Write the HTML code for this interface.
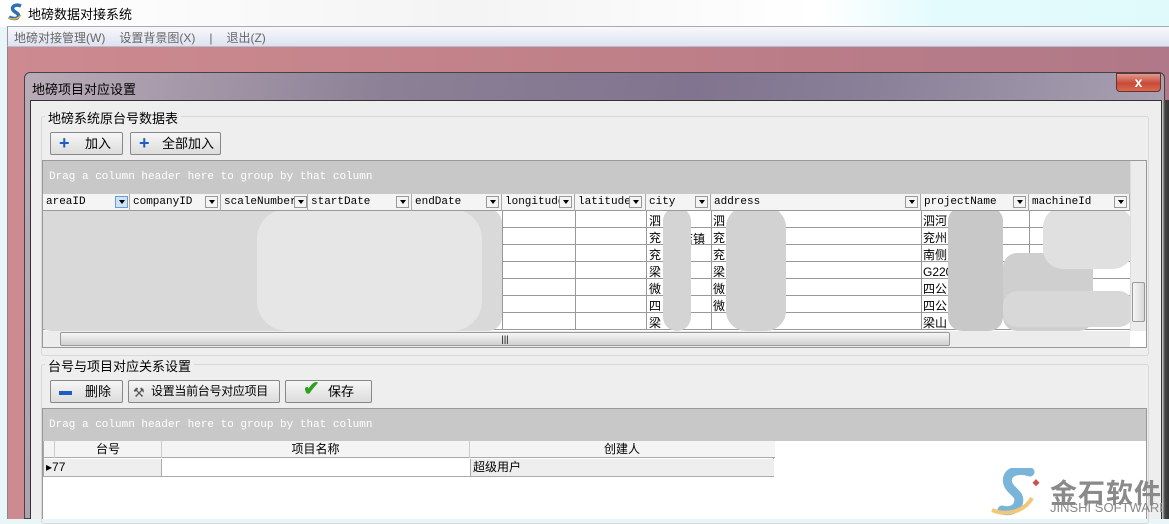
<!DOCTYPE html>
<html><head><meta charset="utf-8"><style>
*{margin:0;padding:0;box-sizing:border-box}
body{width:1169px;height:519px;overflow:hidden;position:relative;background:#e8f6fa;font-family:"Liberation Sans","Noto Sans CJK SC",sans-serif;font-size:12px;color:#000}
.a{position:absolute}
.mono{font-family:"Liberation Mono","Noto Sans CJK SC",monospace;font-size:11px}
.btn{position:absolute;height:23px;border:1px solid #888;border-radius:2px;background:linear-gradient(#f6f6f6,#dcdcdc);font-size:12px;line-height:21px;white-space:nowrap}
.hd{position:absolute;top:0;height:17px;border-right:1px solid #aaa;line-height:17px;padding-left:3px;overflow:hidden;white-space:nowrap}
.dd{position:absolute;top:2px;width:13px;height:12px;border:1px solid #999;background:#f4f4f4}
.dd:after{content:"";position:absolute;left:3px;top:3px;border-left:3px solid transparent;border-right:3px solid transparent;border-top:4px solid #000}
.vl{position:absolute;top:0;width:1px;height:119px;background:#999}
.hl{position:absolute;left:0;height:1px;width:1088px;background:#999}
.blob{position:absolute;background:#d6d6d6;border-radius:14px}
</style></head><body>
<div class="a" style="left:0;top:0;width:1169px;height:27px;background:linear-gradient(90deg,#fff 0,#f4f4f4 40%,#fff 70%,#e4fbfd 80%,#e0fafc 100%)"></div>
<svg class="a" style="left:7px;top:3px" width="18" height="18" viewBox="0 0 18 18"><path d="M14 3C9 1 4 3 6 7c2 3 7 3 5 7-1 2-6 2-9 0" fill="none" stroke="#2e6fb5" stroke-width="3.5"/><path d="M2 15c4 2 9 1 12-3" fill="none" stroke="#f0b040" stroke-width="1.5"/></svg>
<div class="a" style="left:28px;top:4px;font-size:13px">地磅数据对接系统</div>
<div class="a" style="left:7px;top:26px;width:1162px;height:21px;background:linear-gradient(#f8f9fc,#dde2f0);border-top:1px solid #aaa;border-left:1px solid #999;border-bottom:1px solid #b8bccc"></div>
<div class="a" style="left:14px;top:29px;color:#666;font-size:12px;white-space:nowrap">地磅对接管理(W)<span style="margin-left:14px">设置背景图(X)</span><span style="margin-left:14px">|</span><span style="margin-left:14px">退出(Z)</span></div>
<div class="a" style="left:7px;top:47px;width:1162px;height:472px;background:linear-gradient(90deg,#cd8a90,#c08088 50%,#b07888);border-left:1px solid #888"></div>
<div class="a" style="left:24px;top:72px;width:1141px;height:447px;border:1px solid #444;border-radius:6px 6px 0 0;background:linear-gradient(100deg,#b9acb8 0%,#8c8096 30%,#807490 55%,#8a8098 70%,#b0a8b8 100%)"></div>
<div class="a" style="left:32px;top:79px;font-size:13px">地磅项目对应设置</div>
<div class="a" style="left:1116px;top:73px;width:45px;height:19px;border:1px solid #6a3030;border-radius:0 0 4px 4px;background:linear-gradient(#e09a90,#c84a38 55%,#d86a50);color:#fff;font-weight:bold;text-align:center;line-height:17px;font-size:14px">x</div>
<div class="a" style="left:30px;top:100px;width:1132px;height:419px;background:#eee;border:1px solid #333;border-bottom:none"></div>
<div class="a" style="left:41px;top:116px;width:1108px;height:240px;border:1px solid #d8d8d8;border-radius:3px"></div>
<div class="a" style="left:45px;top:108px;background:#eee;padding:0 3px;font-size:13px">地磅系统原台号数据表</div>
<div class="btn" style="left:50px;top:132px;width:73px"><span style="position:absolute;left:8px;top:0;color:#1d5cc0;font-weight:bold;font-size:18px">+</span><span style="position:absolute;left:34px;font-size:13px">加入</span></div>
<div class="btn" style="left:130px;top:132px;width:91px"><span style="position:absolute;left:8px;top:0;color:#1d5cc0;font-weight:bold;font-size:18px">+</span><span style="position:absolute;left:31px;font-size:13px">全部加入</span></div>
<div class="a" style="left:42px;top:160px;width:1105px;height:188px;background:#fff;border:1px solid #999"></div>
<div class="a" style="left:43px;top:161px;width:1087px;height:33px;background:#c8c8c8"></div>
<div class="a mono" style="left:49px;top:171px;color:#fff">Drag a column header here to group by that column</div>
<div class="a mono" style="left:43px;top:194px;width:1087px;height:17px;background:#f4f4f4;border-bottom:1px solid #999">
<div class="hd" style="left:0;width:87px">areaID</div><div class="dd" style="left:72px;background:#cfe3f8;border-color:#6a9ad0"></div>
<div class="hd" style="left:87px;width:91px">companyID</div><div class="dd" style="left:162px"></div>
<div class="hd" style="left:178px;width:87px">scaleNumber</div><div class="dd" style="left:251px"></div>
<div class="hd" style="left:265px;width:104px">startDate</div><div class="dd" style="left:353px"></div>
<div class="hd" style="left:369px;width:90px">endDate</div><div class="dd" style="left:443px"></div>
<div class="hd" style="left:459px;width:73px">longitude</div><div class="dd" style="left:516px"></div>
<div class="hd" style="left:532px;width:71px">latitude</div><div class="dd" style="left:586px"></div>
<div class="hd" style="left:603px;width:65px">city</div><div class="dd" style="left:652px"></div>
<div class="hd" style="left:668px;width:210px">address</div><div class="dd" style="left:862px"></div>
<div class="hd" style="left:878px;width:108px">projectName</div><div class="dd" style="left:970px"></div>
<div class="hd" style="left:986px;width:101px">machineId</div><div class="dd" style="left:1071px"></div>
</div>
<div class="a" style="left:43px;top:211px;width:1087px;height:120px;overflow:hidden">
<div class="hl" style="top:16px"></div><div class="hl" style="top:33px"></div><div class="hl" style="top:50px"></div><div class="hl" style="top:67px"></div><div class="hl" style="top:84px"></div><div class="hl" style="top:101px"></div><div class="hl" style="top:118px"></div>
<div class="vl" style="left:459px"></div><div class="vl" style="left:532px"></div><div class="vl" style="left:603px"></div><div class="vl" style="left:668px"></div><div class="vl" style="left:878px"></div><div class="vl" style="left:986px"></div>
<div class="a" style="left:606px;top:2px;line-height:17px;font-size:12px">泗<br>兖<br>兖<br>梁<br>微<br>四<br>梁</div>
<div class="a" style="left:670px;top:2px;line-height:17px;font-size:12px">泗<br>兖<br>兖<br>梁<br>微<br>微</div>
<div class="a" style="left:880px;top:2px;line-height:17px;font-size:12px">泗河<br>兖州<br>南侧<br>G220<br>四公<br>四公<br>梁山</div>
<div class="a" style="left:638px;top:19px;font-size:12px">店镇</div><div class="a" style="left:710px;top:19px;font-size:12px">镇</div><div class="a" style="left:710px;top:36px;font-size:12px">镇</div><div class="a" style="left:935px;top:19px;font-size:12px">镇</div>
<div class="blob" style="left:-6px;top:-2px;width:465px;height:122px;background:#d9d9d9"></div>
<div class="blob" style="left:214px;top:-2px;width:225px;height:122px;background:#e6e6e6;border-radius:30px"></div>
<div class="blob" style="left:620px;top:-4px;width:28px;height:124px;background:#d4d4d4"></div>
<div class="blob" style="left:683px;top:-4px;width:60px;height:124px;background:#d2d2d2;border-radius:20px"></div>
<div class="blob" style="left:905px;top:-4px;width:55px;height:124px;background:#c8c8c8"></div>
<div class="blob" style="left:960px;top:42px;width:90px;height:78px;background:#cfcfcf"></div>
<div class="blob" style="left:1000px;top:-4px;width:90px;height:62px;background:#e0e0e0;border-radius:20px"></div>
<div class="blob" style="left:960px;top:80px;width:130px;height:36px;background:#d8d8d8"></div>
</div>
<div class="a" style="left:1130px;top:161px;width:16px;height:170px;background:#ececec;border-left:1px solid #ddd"></div>
<div class="a" style="left:1132px;top:282px;width:13px;height:40px;background:linear-gradient(90deg,#f6f6f6,#d8d8d8);border:1px solid #999;border-radius:2px"></div>
<div class="a" style="left:43px;top:331px;width:1087px;height:16px;background:#ececec"></div>
<div class="a" style="left:60px;top:332px;width:890px;height:14px;background:linear-gradient(#f6f6f6,#d0d0d0);border:1px solid #999;border-radius:2px;text-align:center;font-size:9px;line-height:12px">|||</div>
<div class="a" style="left:41px;top:364px;width:1108px;height:160px;border:1px solid #d8d8d8;border-radius:3px"></div>
<div class="a" style="left:45px;top:356px;background:#eee;padding:0 3px;font-size:13px">台号与项目对应关系设置</div>
<div class="btn" style="left:50px;top:380px;width:73px"><span style="position:absolute;left:8px;top:10px;width:13px;height:4px;background:#1d5cc0"></span><span style="position:absolute;left:34px;font-size:13px">删除</span></div>
<div class="btn" style="left:128px;top:380px;width:152px"><span style="position:absolute;left:4px;top:1px;color:#555;font-size:13px">⚒</span><span style="position:absolute;left:22px;font-size:12px;letter-spacing:-0.3px">设置当前台号对应项目</span></div>
<div class="btn" style="left:285px;top:380px;width:87px"><span style="position:absolute;left:17px;top:-2px;color:#2fa020;font-size:20px;font-weight:bold">✔</span><span style="position:absolute;left:42px;font-size:13px">保存</span></div>
<div class="a" style="left:42px;top:408px;width:1105px;height:111px;background:#fff;border:1px solid #999;border-bottom:none"></div>
<div class="a" style="left:43px;top:409px;width:1103px;height:32px;background:#c8c8c8"></div>
<div class="a mono" style="left:49px;top:419px;color:#fff">Drag a column header here to group by that column</div>
<div class="a" style="left:43px;top:441px;width:731px;height:36px;border:1px solid #aaa;border-top:none;font-size:12px">
<div class="a" style="left:0;top:0;width:731px;height:17px;background:#f4f4f4;border-bottom:1px solid #aaa"></div>
<div class="a" style="left:10px;top:0;width:108px;height:17px;border-left:1px solid #ccc;border-right:1px solid #ccc;text-align:center;line-height:17px">台号</div>
<div class="a" style="left:118px;top:0;width:308px;height:17px;border-right:1px solid #ccc;text-align:center;line-height:17px">项目名称</div>
<div class="a" style="left:426px;top:0;width:304px;height:17px;text-align:center;line-height:17px">创建人</div>
<div class="a" style="left:0;top:18px;width:118px;height:17px;background:#eee;border-right:1px solid #aaa;line-height:17px;padding-left:2px">▸77</div>
<div class="a" style="left:426px;top:18px;width:304px;height:17px;background:#eee;border-left:1px solid #aaa;line-height:17px;padding-left:2px">超级用户</div>
</div>
<svg class="a" style="left:990px;top:468px" width="56" height="50" viewBox="0 0 56 50"><path d="M40 4C28 0 14 4 18 16c3 8 14 10 10 20-2 6-10 8-16 6" fill="none" stroke="#7ab4d8" stroke-width="9" stroke-linecap="round"/><path d="M2 42c14 6 32 2 40-12" fill="none" stroke="#f0c878" stroke-width="4"/><rect x="44" y="12" width="5" height="5" fill="#d05050" transform="rotate(45 46 14)"/></svg>
<div class="a" style="left:1050px;top:472px;font-size:27px;font-weight:bold;color:#8a8a8a;letter-spacing:1px">金石软件</div>
<div class="a" style="left:1050px;top:500px;font-size:13px;color:#888;white-space:nowrap">JINSHI SOFTWARE</div>
<div class="a" style="left:1162px;top:100px;width:7px;height:419px;background:linear-gradient(90deg,#d8d8d8,#444 40%,#333)"></div>
</body></html>
